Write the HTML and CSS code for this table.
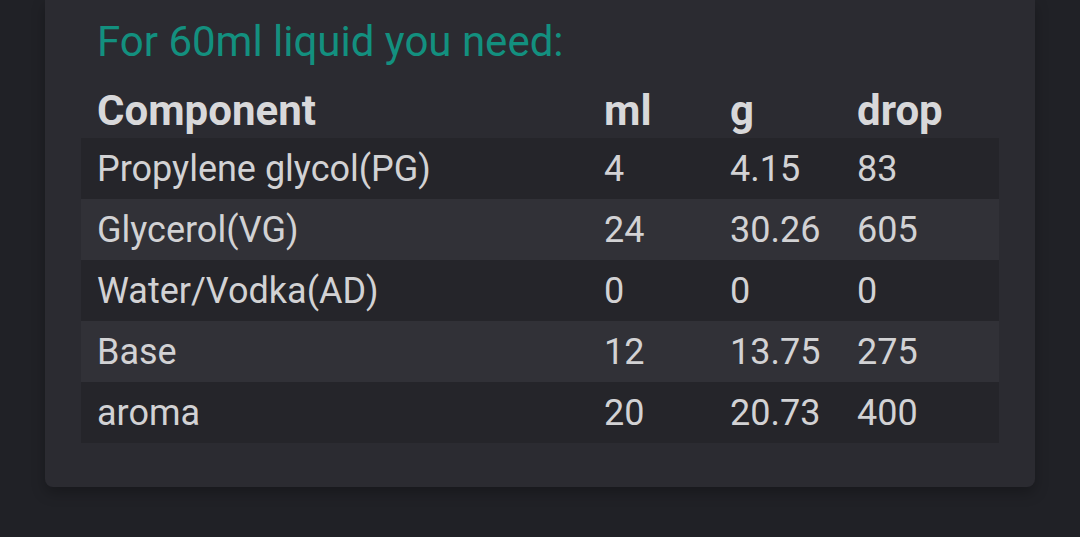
FILE: index.html
```html
<!DOCTYPE html>
<html lang="en">
<head>
<meta charset="utf-8">
<title>Liquid calculator</title>
<link rel="stylesheet" href="styles.css">
</head>
<body>
<div class="page">
  <div class="card">
    <h2 class="result-title">For 60ml liquid you need:</h2>
    <table class="result">
      <thead>
        <tr><th class="c-name">Component</th><th class="c-ml">ml</th><th class="c-g">g</th><th class="c-drop">drop</th></tr>
      </thead>
      <tbody>
        <tr><td>Propylene glycol(PG)</td><td>4</td><td>4.15</td><td>83</td></tr>
        <tr><td>Glycerol(VG)</td><td>24</td><td>30.26</td><td>605</td></tr>
        <tr><td>Water/Vodka(AD)</td><td>0</td><td>0</td><td>0</td></tr>
        <tr><td>Base</td><td>12</td><td>13.75</td><td>275</td></tr>
        <tr><td>aroma</td><td>20</td><td>20.73</td><td>400</td></tr>
      </tbody>
    </table>
  </div>
</div>
</body>
</html>
```

FILE: styles.css
```css
html, body { margin: 0; padding: 0; background: #202126; }
body { font-family: Roboto, "Noto Sans", sans-serif; height: 537px; overflow: hidden; }
.page { padding: 0 45px; }
.card { background: #2b2b31; border-radius: 0 0 8px 8px; padding: 18px 36px 44px 36px; box-shadow: 0 6px 14px rgba(0,0,0,0.25); }
.result-title { margin: 0; padding-left: 16px; font-weight: 400; font-size: 42px; line-height: 48px; color: #13907f; white-space: nowrap; }
.result { width: 100%; border-collapse: collapse; color: #d2d2d4; }
.result th { text-align: left; font-weight: 700; font-size: 42px; line-height: 44px; padding: 23px 16px 5px 16px; color: #d8d8da; }
.result td { font-size: 36px; line-height: 59px; height: 59px; padding: 2px 16px 0 16px; }
.result tbody tr:nth-child(odd) { background: #25252a; }
.result tbody tr:nth-child(even) { background: #313137; }
.c-name { width: 475px; }
.c-ml { width: 94px; }
.c-g { width: 95px; }
```
